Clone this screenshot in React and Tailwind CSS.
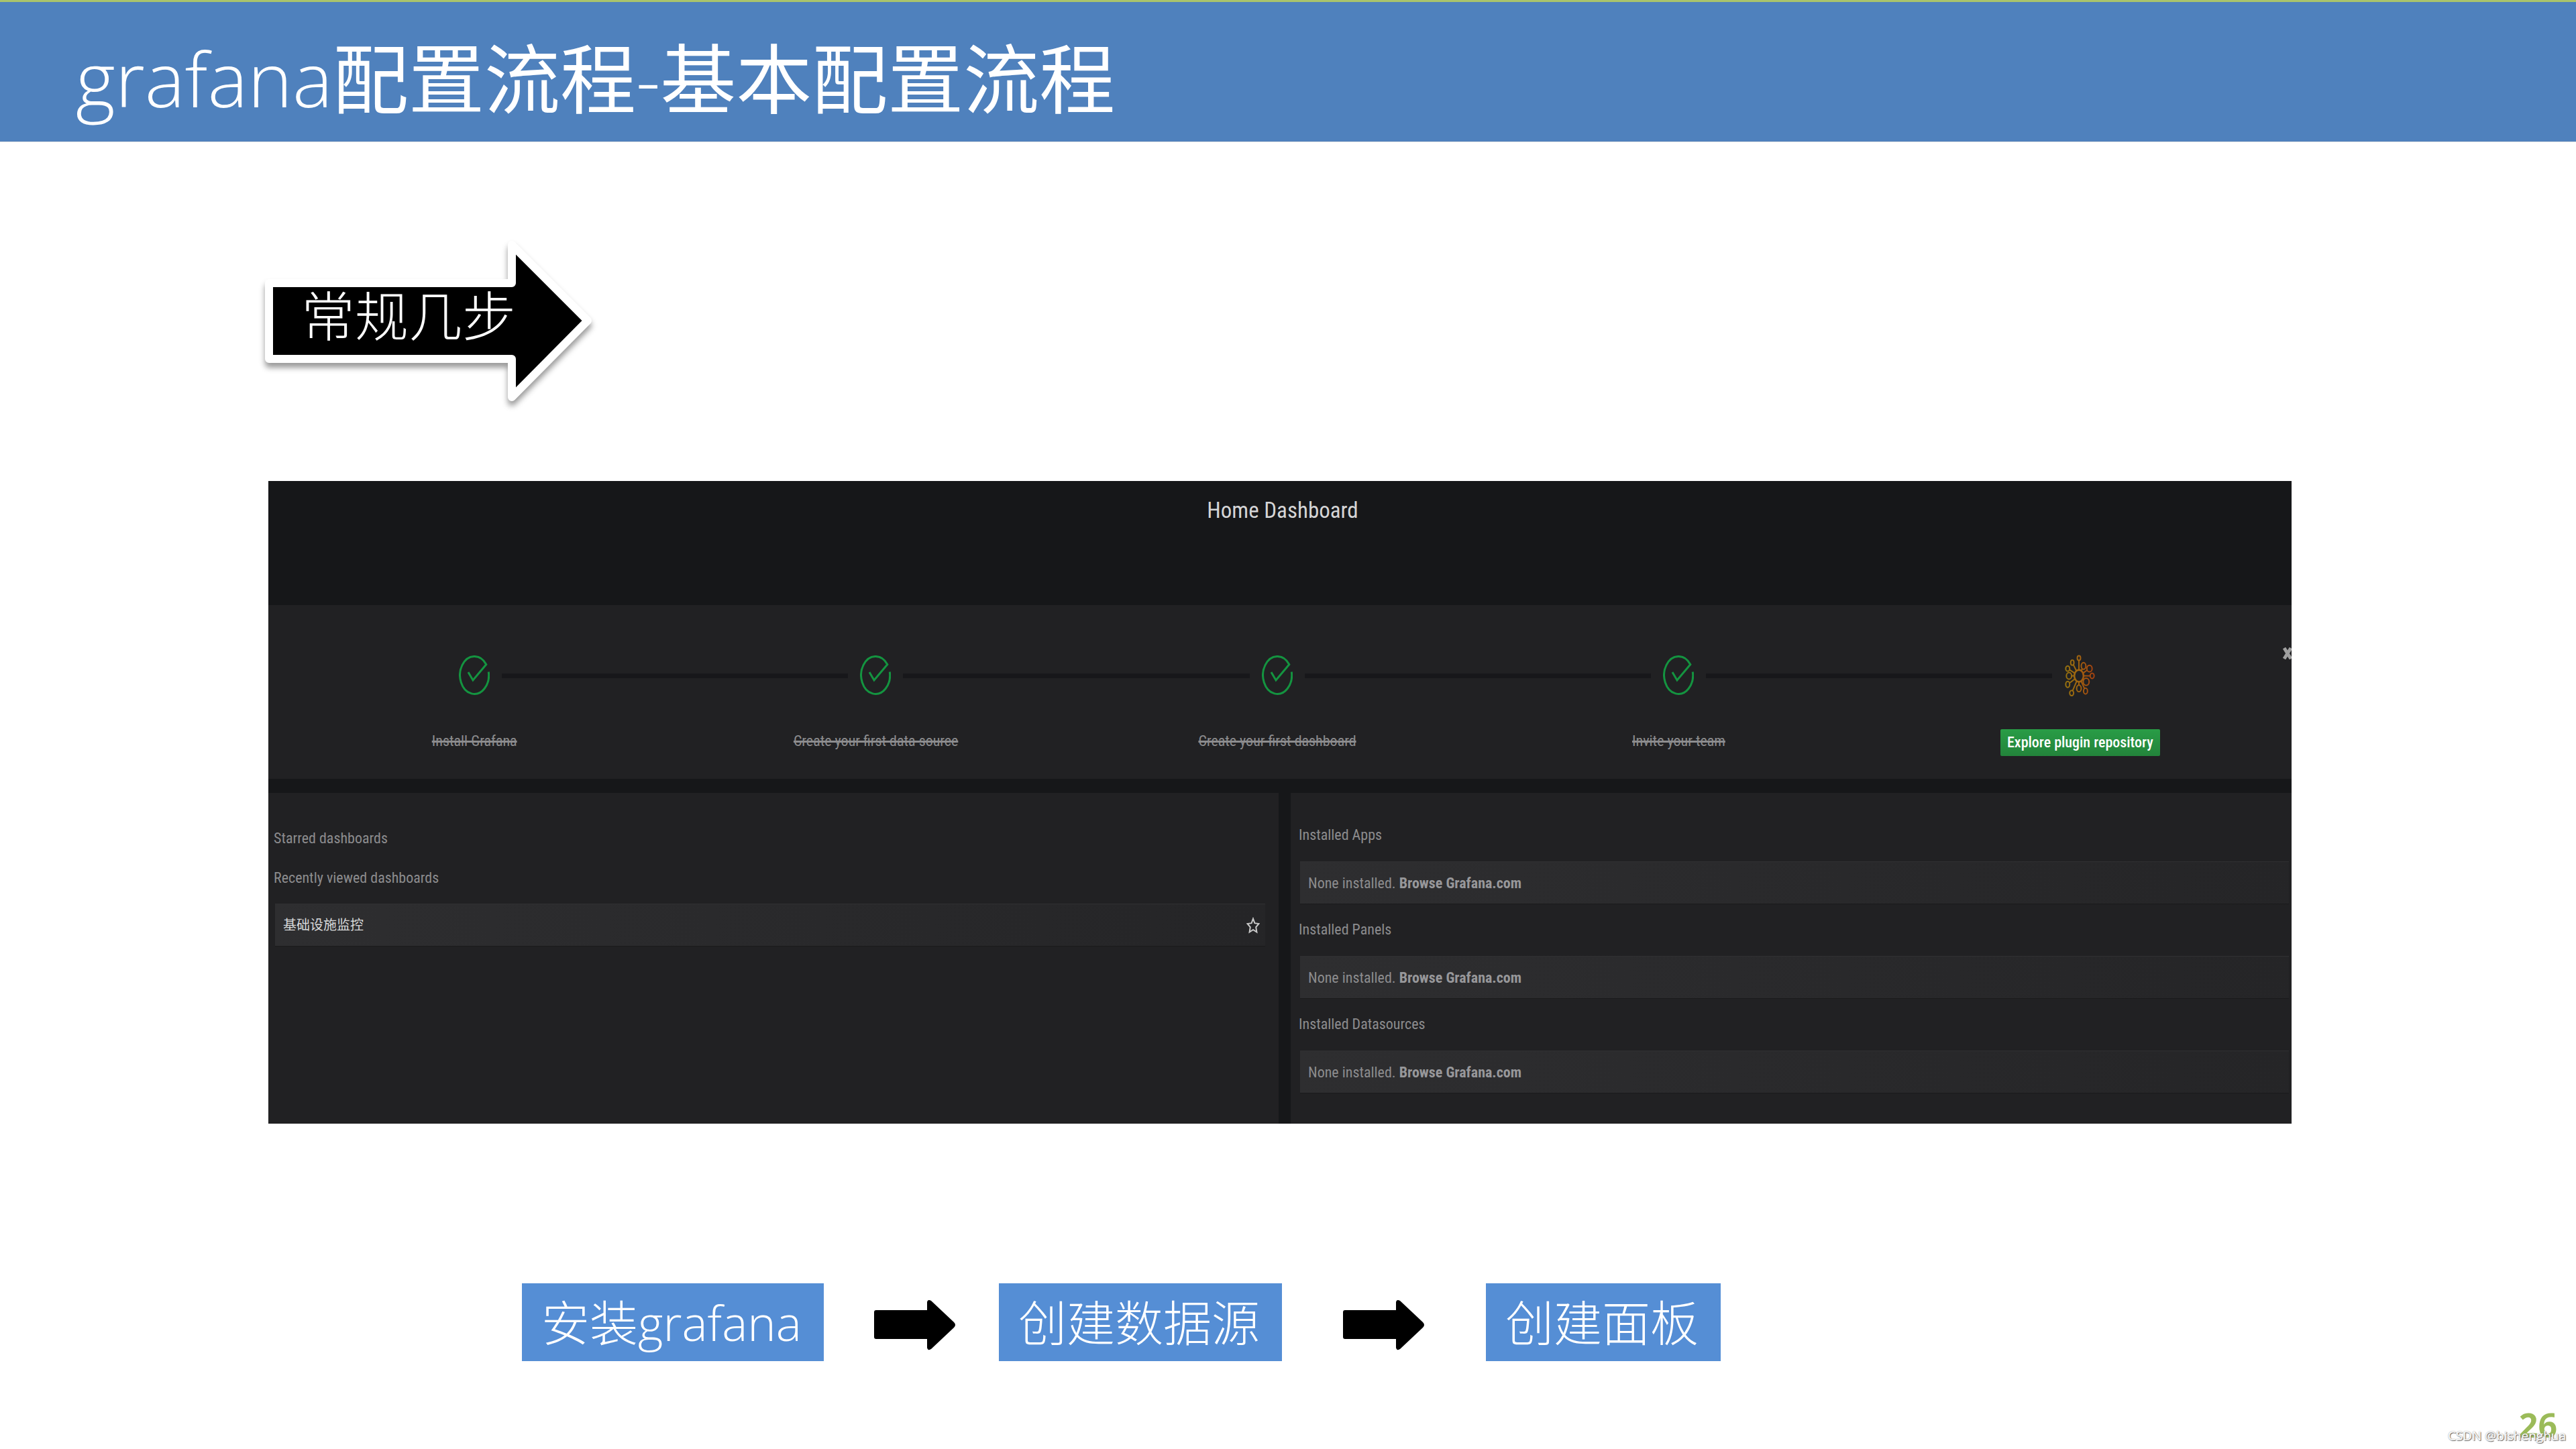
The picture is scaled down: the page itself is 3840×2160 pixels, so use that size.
import { Fragment } from "react";

const steps = [
  { label: "Install Grafana", done: true },
  { label: "Create your first data source", done: true },
  { label: "Create your first dashboard", done: true },
  { label: "Invite your team", done: true },
  { label: "Explore plugin repository", done: false },
];

const plugins = ["Installed Apps", "Installed Panels", "Installed Datasources"];

const flow = ["安装grafana", "创建数据源", "创建面板"];

// x, y, rx, ry of the circles around the plugin icon
const pluginNodes = [
  [21, 4, 2.5, 3.5],
  [11, 11, 2.5, 4],
  [4, 20, 3, 4],
  [6, 31, 4, 5],
  [4, 44, 3, 4.5],
  [10, 57, 3, 4],
  [21, 50, 3.5, 5],
  [31, 54, 3, 4.5],
  [32, 40, 4.5, 5.5],
  [41, 31, 3, 4],
  [37, 20, 4, 5],
  [28, 16, 3.5, 5],
];

const CheckIcon = () => (
  <svg viewBox="0 0 46 60" className="h-[60px] w-[46px]" fill="none">
    <path
      d="M44.3 24.5 A21.5 28 0 1 1 40.8 13.5 L21 37 L14 25"
      stroke="#149440"
      strokeWidth="3"
    />
  </svg>
);

const PluginIcon = () => (
  <svg viewBox="-1 -1 46 63" className="h-[62px] w-[46px]" fill="none">
    <defs>
      <linearGradient
        id="plugin"
        gradientUnits="userSpaceOnUse"
        x1="0"
        y1="0"
        x2="44"
        y2="0"
      >
        <stop offset="0" stopColor="#96730f" />
        <stop offset="0.5" stopColor="#a06210" />
        <stop offset="1" stopColor="#a5400f" />
      </linearGradient>
    </defs>
    <g stroke="url(#plugin)" strokeWidth="2">
      <ellipse cx="21" cy="31" rx="7" ry="9" strokeWidth="2.6" />
      {pluginNodes.map(([x, y, rx, ry]) => {
        const dx = x - 21;
        const dy = y - 31;
        const inner = 1 / Math.hypot(dx / 7, dy / 9);
        const outer = 1 - 1 / Math.hypot(dx / rx, dy / ry);
        return (
          <Fragment key={`${x}-${y}`}>
            <ellipse cx={x} cy={y} rx={rx} ry={ry} />
            <path
              d={`M${21 + dx * inner} ${31 + dy * inner} L${21 + dx * outer} ${31 + dy * outer}`}
            />
          </Fragment>
        );
      })}
    </g>
  </svg>
);

const StarIcon = () => (
  <svg viewBox="0 0 20 25" className="h-[25px] w-5" fill="none">
    <path
      d="M10 2.5 L12.4 9.2 L18.5 10 L14.2 15 L15.4 22.5 L10 19 L4.6 22.5 L5.8 15 L1.5 10 L7.6 9.2 Z"
      stroke="#c8c8c8"
      strokeWidth="2"
    />
  </svg>
);

const FlowArrow = () => (
  <svg viewBox="0 0 122 76" className="h-[76px] w-[122px]">
    <path
      d="M3 16 H79 V4 Q80 -1 85 2 L119 34 Q123 38 119 42 L85 74 Q80 77 79 72 V59 H3 Q0 59 0 56 V19 Q0 16 3 16 Z"
      fill="#000"
    />
  </svg>
);

const Row = ({ children }) => (
  <div className="ml-0.5 flex h-16 items-center justify-between border-t border-b border-t-[#303032] border-b-[#1a1a1b] bg-linear-to-r from-[#2e2e30] to-[#252527] pr-2 pl-3">
    {children}
  </div>
);

const Label = ({ children }) => (
  <h3 className="text-[22px] leading-10 font-normal text-[#8c8c8e]">{children}</h3>
);

const Dashboard = () => (
  <section className="bg-[#161719] font-['Roboto_Condensed',Roboto,'Noto_Sans_CJK_SC',sans-serif]">
    <h2 className="h-[185px] pt-6 pl-2 text-center text-[33px] leading-10 text-[#d5d5d6]">
      Home Dashboard
    </h2>

    {/* getting started steps */}
    <div className="relative bg-[#212123] pt-[75px] pr-4 pb-[34px] pl-2">
      <ol className="flex">
        {steps.map((step, idx) => (
          <li key={step.label} className="flex flex-1 flex-col gap-[50px]">
            <div className="flex h-[60px] items-center gap-[18px]">
              <div
                className={`h-[7px] flex-1 ${idx === 0 ? "" : "-ml-px bg-[#17171a]"}`}
              />
              {step.done ? <CheckIcon /> : <PluginIcon />}
              <div
                className={`h-[7px] flex-1 ${idx === steps.length - 1 ? "" : "bg-[#17171a]"}`}
              />
            </div>
            {step.done ? (
              <p className="text-center text-[22px] leading-9 text-[#8c8c8e] line-through decoration-3">
                {step.label}
              </p>
            ) : (
              <button className="self-center rounded-xs bg-linear-to-b from-[#299c46] to-[#23843b] px-2.5 text-[22px] leading-10 font-medium text-white">
                {step.label}
              </button>
            )}
          </li>
        ))}
      </ol>
      <button
        aria-label="Close"
        className="absolute top-[63px] right-0 text-[#a0a0a0]"
      >
        <svg viewBox="0 0 14 18" className="h-[18px] w-3.5">
          <path d="M3 1 L13 17 M13 1 L3 17" stroke="currentColor" strokeWidth="5" />
        </svg>
      </button>
    </div>

    <div className="mt-[21px] grid grid-cols-[1506fr_1492fr] gap-[18px]">
      <div className="bg-[#212123] pt-12 pr-5 pl-2">
        <Label>Starred dashboards</Label>
        <div className="mt-[19px] mb-[18px]">
          <Label>Recently viewed dashboards</Label>
        </div>
        <Row>
          <a href="#dashboard" className="text-xl text-[#d8d9da]">
            基础设施监控
          </a>
          <button aria-label="Star">
            <StarIcon />
          </button>
        </Row>
      </div>

      <div className="flex flex-col gap-[18px] bg-[#212123] pt-[43px] pr-1 pb-[45px] pl-3">
        {plugins.map((name) => (
          <div key={name}>
            <Label>{name}</Label>
            <div className="mt-[19px]">
              <Row>
                <p className="text-[22px] text-[#8c8c8e]">
                  None installed.{" "}
                  <a href="#plugins" className="font-bold text-[#97979a]">
                    Browse Grafana.com
                  </a>
                </p>
              </Row>
            </div>
          </div>
        ))}
      </div>
    </div>
  </section>
);

export default function App() {
  return (
    <div className="relative flex min-h-screen flex-col bg-white font-['Open_Sans','Noto_Sans_CJK_SC',sans-serif]">
      <header className="border-t-3 border-b border-t-[#a9c46c] border-b-[#e3e3e3] bg-[#4f81bd] px-[113px]">
        <h1 className="pt-[29px] pb-[11px] text-[113px] leading-[168px] font-light text-white">
          grafana<span className="font-normal">配置流程</span>-
          <span className="font-normal">基本配置流程</span>
        </h1>
      </header>

      <main className="flex-1 pr-[424px] pl-[400px]">
        {/* arrow callout */}
        <div className="mt-[138px] -ml-2.5 grid w-[500px]">
          <svg
            viewBox="390 350 500 260"
            className="col-start-1 row-start-1 h-[260px] w-full overflow-visible drop-shadow-[0_7px_4px_rgba(0,0,0,0.4)]"
          >
            <path
              d="M401 422 H763 V365 L876 478 L763 592 V535 H401 Z"
              fill="#000"
              stroke="#fff"
              strokeWidth="12"
              strokeLinejoin="round"
            />
          </svg>
          <p className="relative col-start-1 row-start-1 pt-[60px] pl-[59px] text-[80px] leading-[120px] font-light text-white">
            常规几步
          </p>
        </div>

        <div className="mt-[107px]">
          <Dashboard />
        </div>

        {/* flow */}
        <div className="mt-[238px] ml-[378px] flex items-center">
          {flow.map((name, idx) => (
            <Fragment key={name}>
              {idx > 0 && (
                <div
                  className={`pt-2 ${idx === 1 ? "mr-16 ml-[75px]" : "mr-[91px] ml-[91px]"}`}
                >
                  <FlowArrow />
                </div>
              )}
              <p className="bg-[#558ed5] pr-[33px] pl-[29px] text-[72px] leading-[116px] font-light text-white">
                {name}
              </p>
            </Fragment>
          ))}
        </div>
      </main>

      <footer className="flex flex-col items-end">
        <span className="pr-7 text-[50px] leading-[72px] font-bold text-[#9bbb59]">26</span>
      </footer>
      <span className="absolute right-[15px] bottom-2 text-[19px] leading-6 text-white [text-shadow:1px_1px_1px_#666,0_0_2px_#888]">
        CSDN @bishenghua
      </span>
    </div>
  );
}
